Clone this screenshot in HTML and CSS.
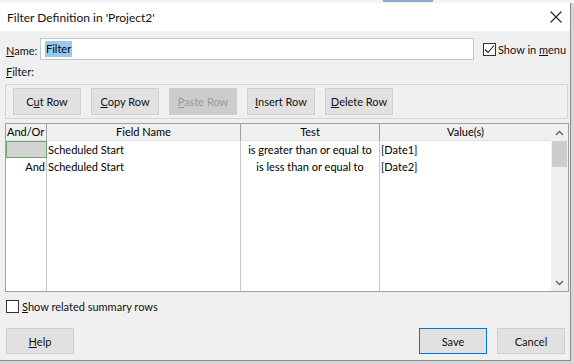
FILE: index.html
```html
<!DOCTYPE html>
<html lang="en">
<head>
  <meta charset="UTF-8" />
  <title>Filter Definition</title>
  <link rel="stylesheet" href="styles.css">
</head>
<body>
  <div class="backdrop"><span class="backdrop-sel"></span></div>

  <div class="dialog">
    <div class="titlebar">
      <span class="title">Filter Definition in 'Project2'</span>
      <svg class="close" width="12" height="12" viewBox="0 0 12 12">
        <path d="M0.5 0.5 L11.5 11.5 M11.5 0.5 L0.5 11.5" stroke="#222" stroke-width="1.1" fill="none" />
      </svg>
    </div>

    <div class="content">
      <div class="name-row">
        <label class="lbl"><u>N</u>ame:</label>
        <div class="textbox"><span class="selected">Filter</span></div>
        <label class="check">
          <span class="box">
            <svg width="11" height="11" viewBox="0 0 11 11">
              <path d="M1 5.5 L4 8.5 L10 1.5" stroke="#222" stroke-width="1.1" fill="none" />
            </svg>
          </span>
          <span>Show in <u>m</u>enu</span>
        </label>
      </div>

      <div class="lbl filter-lbl"><u>F</u>ilter:</div>

      <div class="toolbar">
        <button class="btn">C<u>u</u>t Row</button>
        <button class="btn"><u>C</u>opy Row</button>
        <button class="btn disabled"><u>P</u>aste Row</button>
        <button class="btn"><u>I</u>nsert Row</button>
        <button class="btn"><u>D</u>elete Row</button>
      </div>

      <div class="grid">
        <div class="grid-main">
          <div class="grid-row head">
            <div class="cell c1">And/Or</div>
            <div class="cell c2 center">Field Name</div>
            <div class="cell c3 center">Test</div>
            <div class="cell c4 center">Value(s)</div>
          </div>
          <div class="grid-row">
            <div class="cell c1 active"></div>
            <div class="cell c2">Scheduled Start</div>
            <div class="cell c3 center">is greater than or equal to</div>
            <div class="cell c4">[Date1]</div>
          </div>
          <div class="grid-row">
            <div class="cell c1 right">And</div>
            <div class="cell c2">Scheduled Start</div>
            <div class="cell c3 center">is less than or equal to</div>
            <div class="cell c4">[Date2]</div>
          </div>
          <div class="grid-row fill">
            <div class="cell c1"></div>
            <div class="cell c2"></div>
            <div class="cell c3"></div>
            <div class="cell c4"></div>
          </div>
        </div>
        <div class="scrollbar">
          <svg class="arrow" width="9" height="6" viewBox="0 0 9 6">
            <path d="M1 5 L4.5 1.5 L8 5" stroke="#606060" stroke-width="1.3" fill="none" />
          </svg>
          <div class="thumb"></div>
          <div class="track"></div>
          <svg class="arrow" width="9" height="6" viewBox="0 0 9 6">
            <path d="M1 1 L4.5 4.5 L8 1" stroke="#606060" stroke-width="1.3" fill="none" />
          </svg>
        </div>
      </div>

      <label class="check summary">
        <span class="box"></span>
        <span><u>S</u>how related summary rows</span>
      </label>

      <div class="footer">
        <button class="btn"><u>H</u>elp</button>
        <div class="spacer"></div>
        <button class="btn default">Save</button>
        <button class="btn">Cancel</button>
      </div>
    </div>
  </div>
</body>
</html>
```

FILE: styles.css
```css
* {
  margin: 0;
  padding: 0;
  box-sizing: border-box;
  font-family: Lato, "Noto Sans", sans-serif;
}

body {
  background-color: #d6d6d6;
  color: #000;
  width: 574px;
  height: 364px;
  overflow: hidden;
  font-size: 11px;
}

.backdrop {
  height: 3px;
  background: #f3f3f3;
  position: relative;
}

.backdrop-sel {
  position: absolute;
  left: 383px;
  width: 50px;
  top: 0;
  height: 2px;
  background: #8aa9cc;
}

.dialog {
  width: 571px;
  height: 358px;
  background: #f0f0f0;
  border-right: 1px solid #8c8c8c;
  border-bottom: 1px solid #8c8c8c;
  display: flex;
  flex-direction: column;
}

.titlebar {
  height: 28px;
  background: #ffffff;
  display: flex;
  align-items: center;
  justify-content: space-between;
  padding: 0 8px 0 7px;
}

.title {
  font-size: 12px;
  color: #111;
}

.content {
  flex: 1;
  display: flex;
  flex-direction: column;
  padding: 7px 3px 0 5px;
}

.lbl {
  color: #111;
}

.name-row {
  display: flex;
  align-items: center;
  height: 22px;
}

.name-row .lbl {
  width: 35px;
  flex-shrink: 0;
  padding-left: 1px;
  padding-top: 2px;
}

.textbox {
  width: 434px;
  flex-shrink: 0;
  height: 22px;
  background: #fff;
  border: 1px solid #c5c5c5;
  padding: 1px 4px;
  display: flex;
  align-items: center;
}

.selected {
  background: #99c9ef;
  padding: 0 1px;
  line-height: 16px;
}

.check {
  display: flex;
  align-items: center;
  gap: 3px;
  color: #111;
  white-space: nowrap;
}

.name-row .check {
  margin-left: 9px;
  gap: 2px;
}

.box {
  width: 13px;
  height: 13px;
  flex-shrink: 0;
  border: 1px solid #333;
  background: #fff;
  display: flex;
  align-items: center;
  justify-content: center;
}

.filter-lbl {
  margin-top: 4px;
  padding-left: 1px;
  height: 16px;
  line-height: 16px;
}

.toolbar {
  margin-top: 4px;
  height: 35px;
  width: 563px;
  border: 1px solid #d4d4d4;
  display: flex;
  align-items: center;
  gap: 10px;
  padding-left: 7px;
}

.btn {
  width: 68px;
  height: 27px;
  background: #e1e1e1;
  border: 1px solid #adadad;
  font-size: 11px;
  color: #111;
}

.toolbar .btn {
  border-color: #d0d0d0;
}

.btn.disabled {
  background: #cccccc;
  border-color: #cccccc;
  color: #9a9a9a;
}

.grid {
  margin-top: 4px;
  width: 564px;
  height: 169px;
  border: 1px solid #a0a0a0;
  display: flex;
  background: #fff;
}

.grid-main {
  flex: 1;
  display: flex;
  flex-direction: column;
}

.grid-row {
  display: flex;
  height: 17px;
}

.grid-row.fill {
  flex: 1;
}

.grid-row.head {
  background: #f0f0f0;
  height: 17px;
}

.cell {
  border-right: 1px solid #c8c8c8;
  padding: 0 1px;
  line-height: 17px;
  white-space: nowrap;
  overflow: hidden;
}

.head .cell {
  border-right: 1px solid #a0a0a0;
  border-bottom: 1px solid #e0e0e0;
  line-height: 16px;
}

.head .c4 {
  border-right: none;
}

.c1 { width: 41px; }
.c2 { width: 194px; }
.c3 { width: 139px; }
.c4 { flex: 1; border-right: none; }

.center { text-align: center; }
.right { text-align: right; }

.cell.active {
  background: #d4d4d4;
  border: 1px solid #6aa86a;
}

.scrollbar {
  width: 17px;
  background: #f0f0f0;
  display: flex;
  flex-direction: column;
  align-items: center;
}

.arrow {
  margin: 6px 0 5px;
}

.thumb {
  width: 15px;
  height: 26px;
  background: #cdcdcd;
}

.track {
  flex: 1;
}

.summary {
  margin-top: 7px;
  height: 15px;
  padding-left: 1px;
  gap: 3px;
}

.footer {
  margin-top: 14px;
  display: flex;
  gap: 10px;
  padding-left: 1px;
  padding-right: 2px;
}

.footer .btn {
  width: 68px;
  height: 26px;
  border-color: #cfcfcf;
}

.footer .btn.default {
  border-color: #0078d7;
}

.spacer {
  flex: 1;
}
```
